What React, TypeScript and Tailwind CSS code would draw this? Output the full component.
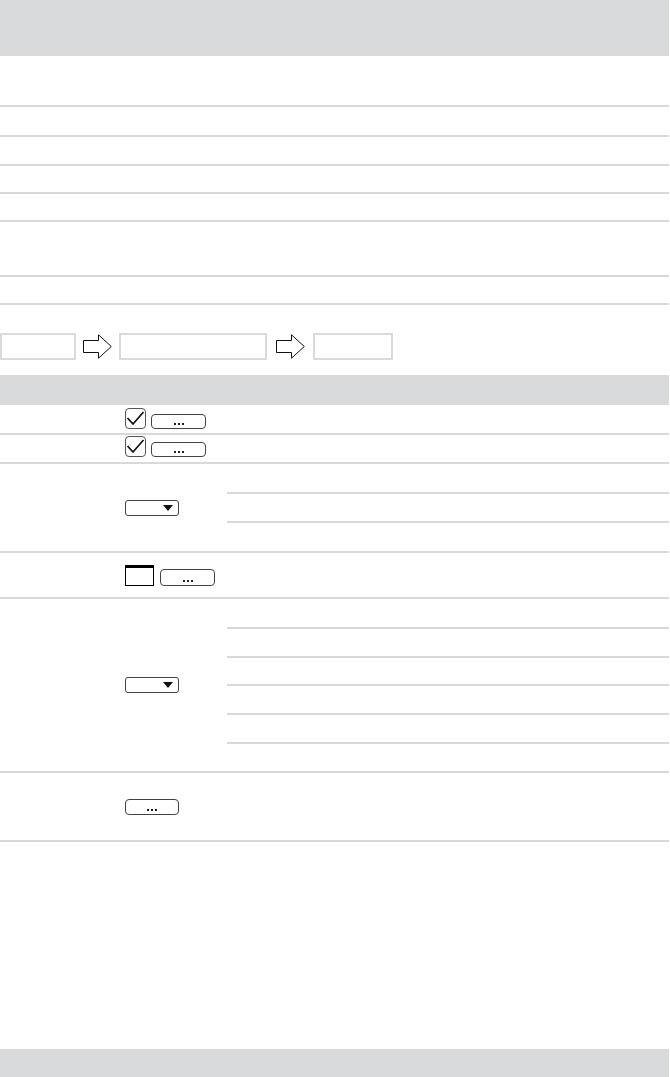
import type { ReactNode } from "react";

const line = "border-b-2 border-[#d9d9d9]";

function Check() {
  return (
    <div className="w-[21px] h-[21px] rounded-[4px] border border-[#555] bg-white flex items-center justify-center">
      <svg width="19" height="19" viewBox="0 0 19 19">
        <path d="M1.5 9 L7 15 L17.5 3" fill="none" stroke="#111" strokeWidth="1.7" />
      </svg>
    </div>
  );
}

function DotsButton({ w = "w-[55px]", h = "h-[15px]" }: { w?: string; h?: string }) {
  return (
    <div className={`${w} ${h} rounded-[4px] border border-[#444] bg-white flex items-end justify-center`}>
      <span className="flex gap-[2px] mb-[3px]">
        <span className="w-[2px] h-[2px] bg-[#222]" />
        <span className="w-[2px] h-[2px] bg-[#222]" />
        <span className="w-[2px] h-[2px] bg-[#222]" />
      </span>
    </div>
  );
}

function Dropdown() {
  return (
    <div className="w-[54px] h-[16px] rounded-[3px] border border-[#444] bg-white flex items-center justify-end pr-[5px]">
      <svg width="10" height="6" viewBox="0 0 10 6">
        <path d="M0 0 H10 L5 6 Z" fill="#111" />
      </svg>
    </div>
  );
}

function Arrow({ ml, mr }: { ml: string; mr: string }) {
  return (
    <svg width="29" height="25" viewBox="0 0 29 25" className={`${ml} ${mr} shrink-0`}>
      <path d="M0.5 6.5 H15.5 V0.8 L28.3 12.5 L15.5 24.2 V18.5 H0.5 Z" fill="white" stroke="#111" strokeWidth="1" />
    </svg>
  );
}

function Row({ h, children, sub }: { h: string; children?: ReactNode; sub?: string[] }) {
  return (
    <div className={`${h} ${line} flex`}>
      <div className="w-[125px] shrink-0" />
      <div className="w-[102px] shrink-0 flex items-center">{children}</div>
      {sub && (
        <div className="flex-1 flex flex-col">
          {sub.map((s, i) =>
            i < sub.length - 1 ? (
              <div key={i} className={`${s} ${line}`} />
            ) : (
              <div key={i} className="flex-1" />
            )
          )}
        </div>
      )}
    </div>
  );
}

export default function App() {
  return (
    <div className="w-[670px] h-[1077px] bg-white flex flex-col font-['Liberation_Sans',Arial,sans-serif]">
      <div className="w-[669px]">
        {/* heading band */}
        <div className="h-[56px] bg-[#d9dadc]" />

        {/* first table */}
        <div className={`h-[51px] ${line}`} />
        <div className={`h-[30px] ${line}`} />
        <div className={`h-[29px] ${line}`} />
        <div className={`h-[28px] ${line}`} />
        <div className={`h-[28px] ${line}`} />
        <div className={`h-[55px] ${line}`} />
        <div className={`h-[28px] ${line}`} />

        {/* flow */}
        <div className="mt-[28px] flex items-center h-[27px]">
          <div className="w-[76px] h-[27px] shrink-0 border-2 border-[#dadada]" />
          <Arrow ml="ml-[7px]" mr="mr-[7px]" />
          <div className="w-[148px] h-[27px] shrink-0 border-2 border-[#dadada]" />
          <Arrow ml="ml-[9px]" mr="mr-[8px]" />
          <div className="w-[80px] h-[27px] shrink-0 border-2 border-[#dadada]" />
        </div>

        {/* second table */}
        <div className="mt-[15px] h-[30px] bg-[#d9dadc]" />

        <Row h="h-[30px]">
          <div className="flex items-end gap-[5px] mt-[-2px]">
            <Check />
            <DotsButton />
          </div>
        </Row>
        <Row h="h-[29px]">
          <div className="flex items-end gap-[5px] mt-[-4px]">
            <Check />
            <DotsButton />
          </div>
        </Row>
        <Row h="h-[89px]" sub={["h-[30px]", "h-[29px]", ""]}>
          <Dropdown />
        </Row>
        <Row h="h-[46px]">
          <div className="flex items-end gap-[6px]">
            <div className="w-[29px] h-[21px] border border-black border-t-[3px] bg-white" />
            <DotsButton h="h-[17px]" />
          </div>
        </Row>
        <Row h="h-[174px]" sub={["h-[30px]", "h-[29px]", "h-[28px]", "h-[29px]", "h-[29px]", ""]}>
          <Dropdown />
        </Row>
        <Row h="h-[69px]">
          <DotsButton w="w-[54px]" h="h-[16px]" />
        </Row>

        <div className="h-[207px]" />
        <div className="h-[28px] bg-[#d9dadc]" />
      </div>
    </div>
  );
}
